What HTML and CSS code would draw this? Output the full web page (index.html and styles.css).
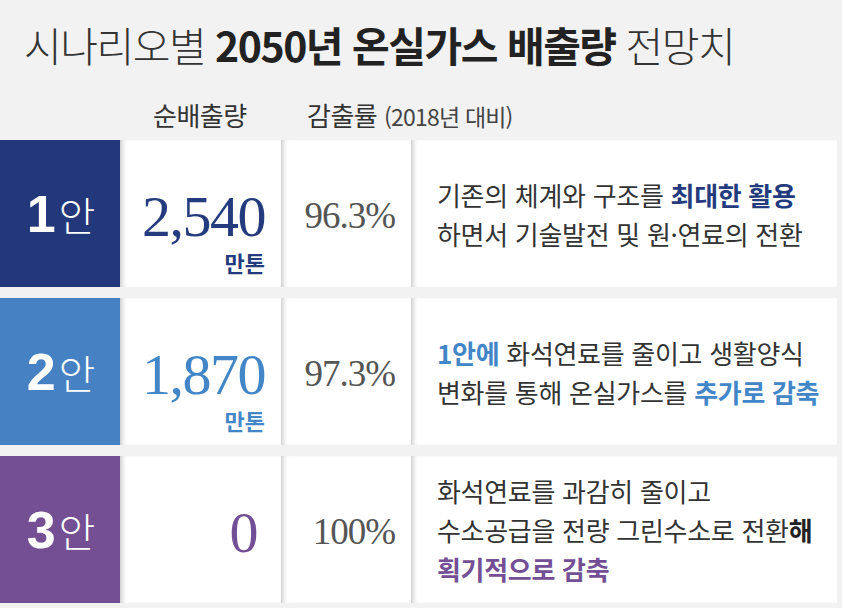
FILE: index.html
```html
<!DOCTYPE html>
<html lang="ko">

<head>
  <meta charset="UTF-8">
  <meta name="viewport" content="width=device-width, initial-scale=1.0">
  <title>시나리오별 2050년 온실가스 배출량 전망치</title>
  <link rel="stylesheet" href="styles.css">
</head>

<body>
  <div class="chart">
    <h1 class="title">시나리오별 <b>2050년 온실가스 배출량</b> 전망치</h1>

    <div class="head">
      <div></div>
      <div class="head-num">순배출량</div>
      <div class="head-pct">감출률 <small>(2018년 대비)</small></div>
      <div></div>
    </div>

    <div class="row plan-1">
      <div class="label"><b>1</b>안</div>
      <div class="amount">
        <span class="num">2,540</span>
        <span class="unit">만톤</span>
      </div>
      <div class="pct">96.3%</div>
      <div class="desc">
        <p>기존의 체계와 구조를 <em>최대한 활용</em></p>
        <p>하면서 기술발전 및 원·연료의 전환</p>
      </div>
    </div>

    <div class="row plan-2">
      <div class="label"><b>2</b>안</div>
      <div class="amount">
        <span class="num">1,870</span>
        <span class="unit">만톤</span>
      </div>
      <div class="pct">97.3%</div>
      <div class="desc">
        <p><em>1안에</em> 화석연료를 줄이고 생활양식</p>
        <p>변화를 통해 온실가스를 <em>추가로 감축</em></p>
      </div>
    </div>

    <div class="row plan-3">
      <div class="label"><b>3</b>안</div>
      <div class="amount">
        <span class="num zero">0</span>
      </div>
      <div class="pct">100%</div>
      <div class="desc">
        <p>화석연료를 과감히 줄이고</p>
        <p>수소공급을 전량 그린수소로 전환<b>해</b></p>
        <p><em>획기적으로 감축</em></p>
      </div>
    </div>
  </div>
</body>

</html>
```

FILE: styles.css
```css
body {
  margin: 0;
  padding: 0;
  background: #f2f2f2;
  font-family: "Noto Sans CJK KR", "Noto Sans", sans-serif;
  color: #333;
}

.chart {
  width: 842px;
  height: 608px;
  overflow: hidden;
}

.title {
  margin: 0;
  padding: 18px 0 0 24px;
  height: 70px;
  font-size: 41px;
  line-height: 52px;
  font-weight: 300;
  letter-spacing: -1.5px;
  color: #333;
}

.title b {
  font-weight: 700;
  color: #222;
}

.head,
.row {
  display: grid;
  grid-template-columns: 120px 161px 130px 426px;
}

.head {
  height: 52px;
  align-items: center;
  font-size: 26px;
  letter-spacing: -0.5px;
  color: #333;
}

.head-num {
  padding-left: 33px;
}

.head-pct {
  padding-left: 26px;
  white-space: nowrap;
}

.head-pct small {
  font-size: 23px;
  letter-spacing: -0.8px;
  color: #444;
}

.row {
  height: 147px;
  margin-bottom: 11px;
}

.row > div {
  background: #fff;
  box-shadow: inset 5px 0 5px -3px rgba(0, 0, 0, 0.22);
}

.row > .label {
  box-shadow: none;
  display: flex;
  align-items: center;
  justify-content: center;
  color: #fff;
  font-size: 40px;
  font-weight: 300;
  padding-left: 2px;
}

.label b {
  font-family: "Liberation Sans", Arial, sans-serif;
  font-size: 52px;
  font-weight: 700;
  margin-right: 3px;
}

.amount {
  display: flex;
  flex-direction: column;
  justify-content: center;
  align-items: flex-end;
  padding-right: 16px;
  padding-top: 6px;
}

.num {
  font-family: "Liberation Serif", "Times New Roman", serif;
  font-size: 58px;
  line-height: 50px;
  letter-spacing: -1.5px;
}

.num.zero {
  margin-right: 8px;
}

.unit {
  font-size: 22px;
  font-weight: 700;
  line-height: 28px;
  margin-top: 6px;
  margin-bottom: -34px;
}

.pct {
  display: flex;
  align-items: center;
  justify-content: flex-end;
  padding-right: 16px;
  padding-top: 4px;
  font-family: "Liberation Serif", "Times New Roman", serif;
  font-size: 37px;
  letter-spacing: -1px;
  color: #555;
}

.desc {
  display: flex;
  flex-direction: column;
  justify-content: center;
  padding-left: 26px;
  font-size: 26px;
  letter-spacing: -0.3px;
  color: #333;
}

.desc p {
  margin: 0;
  line-height: 39px;
  white-space: nowrap;
}

.desc em {
  font-style: normal;
  font-weight: 700;
}

.desc b {
  font-weight: 700;
  color: #222;
}

.row.plan-1 .label {
  background: #23387a;
}

.plan-1 .amount,
.plan-1 .desc em {
  color: #243c7e;
}

.row.plan-2 .label {
  background: #4682c3;
}

.plan-2 .amount,
.plan-2 .desc em {
  color: #4386c8;
}

.row.plan-3 .label {
  background: #744f93;
}

.plan-3 .amount,
.plan-3 .desc em {
  color: #744f95;
}
```
